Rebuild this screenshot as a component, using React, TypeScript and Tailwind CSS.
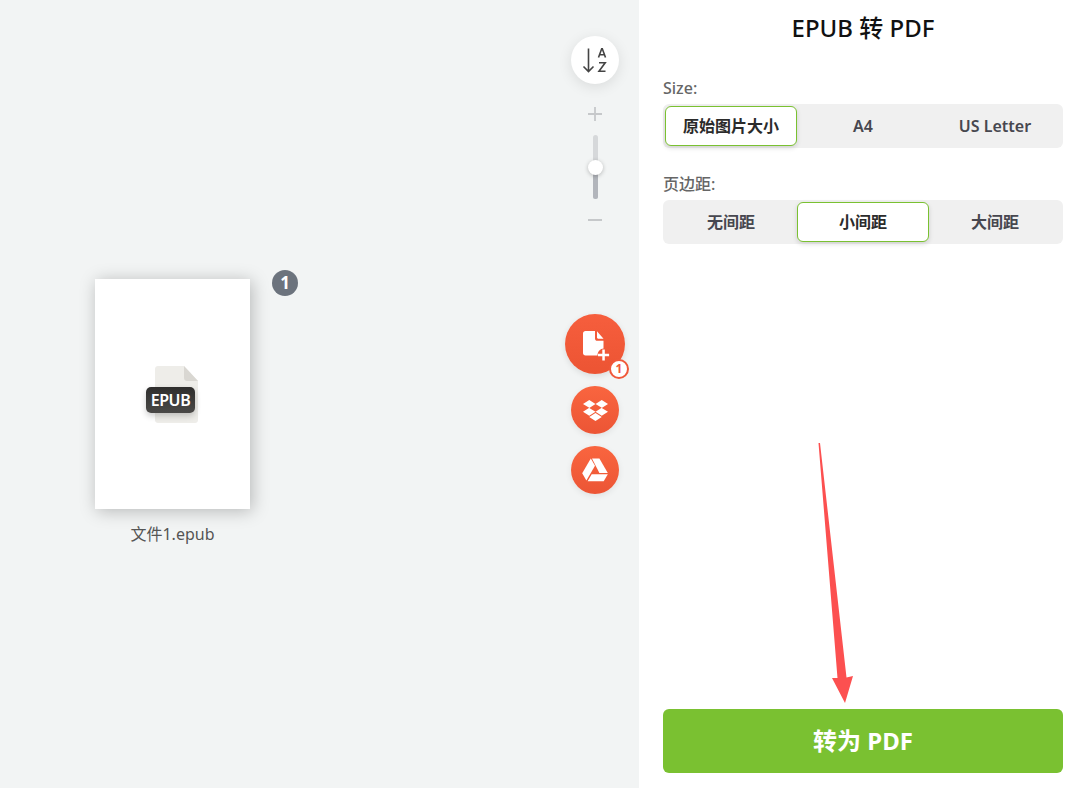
import { FaDropbox } from "react-icons/fa";

const FONT = "[font-family:'Noto_Sans','Noto_Sans_CJK_SC',sans-serif]";

function Segment({ label, active }: { label: string; active?: boolean }) {
  return (
    <div
      className={
        active
          ? "w-[132px] h-10 flex items-center justify-center rounded-md bg-white border border-[#7ac131] shadow-[0_2px_5px_rgba(0,0,0,0.14)] text-base font-semibold text-[#2b2b2b]"
          : "w-[132px] h-10 flex items-center justify-center text-base font-semibold text-[#47474f]"
      }
    >
      {label}
    </div>
  );
}

function Option({ title, items, selected }: { title: string; items: string[]; selected: number }) {
  return (
    <div>
      <div className="text-base leading-[20px] font-medium text-[#666666] mb-[6px]">{title}</div>
      <div className="h-11 rounded-md bg-[#f0f0f0] flex items-center px-[2px]">
        {items.map((item, idx) => (
          <Segment key={item} label={item} active={idx === selected} />
        ))}
      </div>
    </div>
  );
}

function SortIcon() {
  return (
    <svg width="28" height="28" viewBox="0 0 28 28" fill="none" stroke="#444444" strokeWidth="1.6">
      <path d="M7.500 2.500V25.500M2.500 20.500L7.500 25.500L12.500 20.500" />
      <path d="M17.500 11.500L20.700 2.800H21.300L24.500 11.500M18.600 8.700H23.400" />
      <path d="M18 16.800H24.200L18 25.200H24.500" />
    </svg>
  );
}

function FileAddIcon() {
  return (
    <svg width="28" height="32" viewBox="0 0 28 32" fill="white">
      <path d="M2.500 0H12V7.500C12 8.900 13 9.800 14.300 9.800H20.500V17.500C17.500 17.500 14.500 20.500 14.500 24.500H2.500C1 24.500 0 23.500 0 22V2.500C0 1 1 0 2.500 0Z" />
      <path d="M14 0.300L20.500 7.800H15.200C14.500 7.800 14 7.300 14 6.600Z" />
      <path d="M19.300 18.500H21.800V22.800H26.100V25.300H21.800V29.600H19.300V25.300H15V22.800H19.300Z" />
    </svg>
  );
}

function DriveIcon() {
  return (
    <svg width="26" height="24" viewBox="0 0 26 24" fill="white">
      <path d="M8.800 0.500L13 7.700L4.400 22.500L0.200 15.300Z" />
      <path d="M10 0.500H17.400L25.800 15H17.400Z" />
      <path d="M9.700 16.200H25.800L21.700 23.300H5.600Z" />
    </svg>
  );
}

function EpubIcon() {
  return (
    <div className="relative w-[53px] h-[57px]">
      <svg className="absolute left-[9px] top-0" width="44" height="57" viewBox="0 0 44 57">
        <path d="M3 0H29L43 15V54C43 55.700 41.700 57 40 57H3C1.300 57 0 55.700 0 54V3C0 1.300 1.300 0 3 0Z" fill="#eeede9" />
        <path d="M29 0L43 15H32C30.300 15 29 13.700 29 12Z" fill="#d9d7d2" />
      </svg>
      <div className="absolute left-0 top-[21px] w-[49px] h-[26px] rounded-[5px] bg-gradient-to-b from-[#2f2e2d] to-[#4a4947] shadow-[0_3px_6px_rgba(0,0,0,0.2)] flex items-center justify-center text-base font-semibold tracking-[-0.4px] text-white">
        EPUB
      </div>
    </div>
  );
}

function FileCard() {
  return (
    <div className="relative w-[155px]">
      <div className="h-[230px] bg-white shadow-[2px_2px_16px_rgba(0,0,0,0.25)] flex items-center justify-center">
        <EpubIcon />
      </div>
      <div className="absolute -top-[9px] -right-[48px] w-[26px] h-[26px] rounded-full bg-[#6c737d] flex items-center justify-center text-[17px] font-bold text-white">
        1
      </div>
      <div className="mt-[14px] text-center text-base leading-[22px] text-[#555555]">文件1.epub</div>
    </div>
  );
}

function ToolColumn() {
  return (
    <div className="w-[60px] flex flex-col items-center pt-9">
      <div className="w-12 h-12 rounded-full bg-white shadow-[0_3px_14px_rgba(0,0,0,0.1)] flex items-center justify-center">
        <SortIcon />
      </div>
      {/* zoom slider */}
      <svg className="mt-[23px]" width="14" height="14" viewBox="0 0 14 14" stroke="#c6c8ca" strokeWidth="1.800">
        <path d="M7 0V14M0 7H14" />
      </svg>
      <div className="relative mt-[14px] w-[5px] h-16 rounded-full bg-[#d6d8da]">
        <div className="absolute left-0 bottom-0 w-[5px] h-[32px] rounded-b-full bg-[#b2b5bb]" />
        <div className="absolute left-[-5px] top-[25px] w-[15px] h-[15px] rounded-full bg-white shadow-[0_1px_4px_rgba(0,0,0,0.25)]" />
      </div>
      <div className="mt-5 w-[14px] h-[2px] bg-[#c6c8ca]" />
      {/* upload buttons */}
      <div className="relative mt-[93px] w-[60px] h-[60px] rounded-full bg-gradient-to-b from-[#f65e3d] to-[#ec5433] flex items-center justify-center shadow-[0_2px_6px_rgba(0,0,0,0.1)]">
        <span className="ml-1 mt-[6px]">
          <FileAddIcon />
        </span>
        <div className="absolute left-[44px] top-[45px] w-[20px] h-[20px] rounded-full bg-white border-2 border-[#f0583a] flex items-center justify-center text-[12px] font-bold text-[#f0583a]">
          1
        </div>
      </div>
      <div className="mt-3 w-12 h-12 rounded-full bg-gradient-to-b from-[#f9653f] to-[#ec5535] flex items-center justify-center shadow-[0_2px_6px_rgba(0,0,0,0.08)]">
        <FaDropbox className="text-white text-[25px]" />
      </div>
      <div className="mt-3 w-12 h-12 rounded-full bg-gradient-to-b from-[#f9653f] to-[#ec5535] flex items-center justify-center shadow-[0_2px_6px_rgba(0,0,0,0.08)]">
        <DriveIcon />
      </div>
    </div>
  );
}

export default function App() {
  return (
    <div className={`relative h-[788px] w-[1080px] overflow-hidden flex bg-white ${FONT}`}>
      {/* Preview area */}
      <div className="w-[639px] bg-[#f2f4f4] flex pl-[95px] pr-[14px]">
        <div className="flex-1 pt-[279px]">
          <FileCard />
        </div>
        <ToolColumn />
      </div>

      {/* Options */}
      <div className="flex-1 flex flex-col pl-6 pr-[17px] pb-[15px]">
        <h1 className="pt-[11px] text-center text-2xl leading-[34px] font-medium text-[#111111]">EPUB 转 PDF</h1>
        <div className="mt-[33px] flex flex-col gap-[26px]">
          <Option title="Size:" items={["原始图片大小", "A4", "US Letter"]} selected={0} />
          <Option title="页边距:" items={["无间距", "小间距", "大间距"]} selected={1} />
        </div>
        <button className="mt-auto h-16 rounded-md bg-[#7ac131] text-2xl font-bold text-white">转为 PDF</button>
      </div>

      {/* Red annotation arrow */}
      <svg className="absolute left-[810px] top-[435px]" width="50" height="275" viewBox="810 435 50 275">
        <path d="M818.500 443L820 443L846.500 677.500L853 676L845 703L832 678L837.500 678Z" fill="#fc5050" />
      </svg>
    </div>
  );
}
